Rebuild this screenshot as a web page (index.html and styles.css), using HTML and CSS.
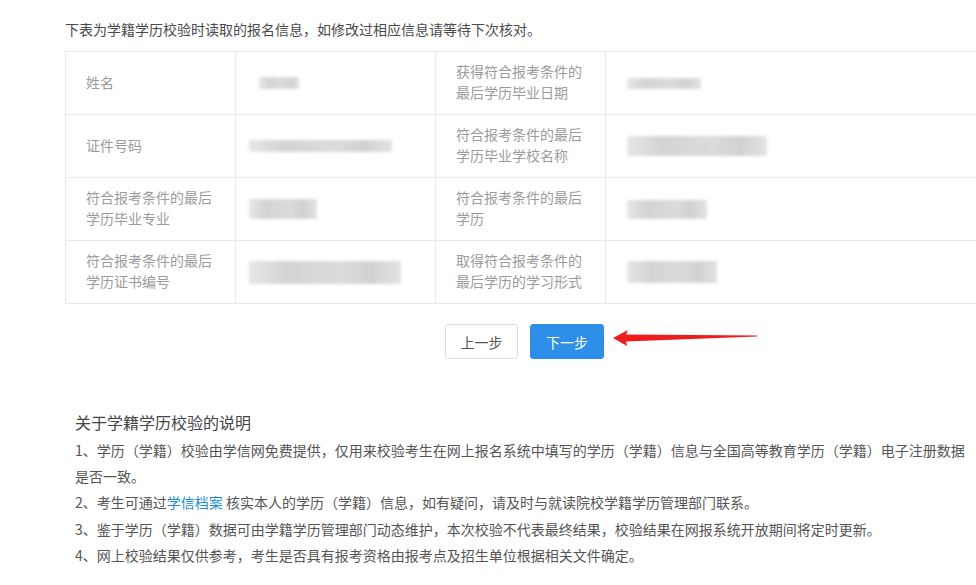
FILE: index.html
```html
<!DOCTYPE html>
<html lang="zh-CN">
<head>
<meta charset="utf-8">
<title>学籍学历校验</title>
<link rel="stylesheet" href="styles.css">
</head>
<body>
<div class="wrap">
  <p class="intro">下表为学籍学历校验时读取的报名信息，如修改过相应信息请等待下次核对。</p>
  <div class="table">
    <div class="cell label">姓名</div>
    <div class="cell value"><span class="blob b-name"></span></div>
    <div class="cell label">获得符合报考条件的<br>最后学历毕业日期</div>
    <div class="cell value"><span class="blob b-date"></span></div>

    <div class="cell label">证件号码</div>
    <div class="cell value"><span class="blob b-id"></span></div>
    <div class="cell label">符合报考条件的最后<br>学历毕业学校名称</div>
    <div class="cell value"><span class="blob b-school"></span></div>

    <div class="cell label">符合报考条件的最后<br>学历毕业专业</div>
    <div class="cell value"><span class="blob b-major"></span></div>
    <div class="cell label">符合报考条件的最后<br>学历</div>
    <div class="cell value"><span class="blob b-level"></span></div>

    <div class="cell label">符合报考条件的最后<br>学历证书编号</div>
    <div class="cell value"><span class="blob b-cert"></span></div>
    <div class="cell label">取得符合报考条件的<br>最后学历的学习形式</div>
    <div class="cell value"><span class="blob b-form"></span></div>
  </div>

  <div class="actions">
    <button class="btn btn-prev">上一步</button>
    <button class="btn btn-next">下一步</button>
    <svg class="arrow" width="160" height="30" viewBox="0 0 160 30">
      <polygon points="8,14 23,6 21,10.5 152,11.6 152,12.6 21,17.5 22,22" fill="#ee1c1c"/>
    </svg>
  </div>
</div>

<div class="notes">
  <h3 class="notes-title">关于学籍学历校验的说明</h3>
  <p>1、学历（学籍）校验由学信网免费提供，仅用来校验考生在网上报名系统中填写的学历（学籍）信息与全国高等教育学历（学籍）电子注册数据是否一致。</p>
  <p>2、考生可通过<a class="link" href="#">学信档案</a> 核实本人的学历（学籍）信息，如有疑问，请及时与就读院校学籍学历管理部门联系。</p>
  <p>3、鉴于学历（学籍）数据可由学籍学历管理部门动态维护，本次校验不代表最终结果，校验结果在网报系统开放期间将定时更新。</p>
  <p>4、网上校验结果仅供参考，考生是否具有报考资格由报考点及招生单位根据相关文件确定。</p>
</div>
</body>
</html>
```

FILE: styles.css
```css
html, body {
  margin: 0;
  padding: 0;
  background: #fff;
  overflow: hidden;
}
body {
  width: 976px;
  height: 585px;
  font-family: "Noto Sans CJK SC", "Noto Sans", sans-serif;
  color: #555;
}
.wrap {
  margin-left: 65px;
  width: 919px;
  padding-top: 19px;
}
.intro {
  margin: 0;
  font-size: 14px;
  line-height: 20px;
  color: #4a4a4a;
}
.table {
  margin-top: 12px;
  display: grid;
  grid-template-columns: 170px 200px 170px 1fr;
  grid-auto-rows: 63px;
  border-top: 1px solid #e9e9e9;
  border-left: 1px solid #e9e9e9;
}
.cell {
  box-sizing: border-box;
  border-right: 1px solid #e9e9e9;
  border-bottom: 1px solid #e9e9e9;
  display: flex;
  align-items: center;
}
.label {
  padding-left: 20px;
  padding-bottom: 2px;
  font-size: 14px;
  line-height: 21px;
  color: #9b9b9b;
}
.value {
  padding-left: 13px;
}
.blob {
  display: block;
  background: linear-gradient(90deg, #e4e4e6 0%, #cfcfd2 25%, #d8d8da 60%, #cdcdd0 80%, #e0e0e2 100%);
  filter: blur(1.6px);
  opacity: 0.9;
}
.b-name { width: 40px; height: 12px; margin-left: 10px; }
.b-id { width: 143px; height: 12px; }
.b-major { width: 68px; height: 20px; }
.b-cert { width: 152px; height: 23px; }
.b-date { width: 74px; height: 11px; margin-left: 8px; }
.b-school { width: 140px; height: 20px; margin-left: 8px; }
.b-level { width: 80px; height: 19px; margin-left: 8px; }
.b-form { width: 90px; height: 22px; margin-left: 8px; }

.actions {
  position: relative;
  margin-top: 20px;
  display: flex;
  justify-content: center;
  gap: 12px;
}
.btn {
  height: 35px;
  border-radius: 3px;
  font-family: "Noto Sans CJK SC", "Noto Sans", sans-serif;
  font-size: 14px;
  padding: 0;
  cursor: pointer;
}
.btn-prev {
  width: 73px;
  background: #fff;
  border: 1px solid #dedede;
  color: #555;
}
.btn-next {
  width: 74px;
  background: #2d8fe7;
  border: 1px solid #2d8fe7;
  color: #fff;
}
.arrow {
  position: absolute;
  left: 540px;
  top: 0;
}

.notes {
  margin-left: 75px;
  padding-top: 51px;
  width: 900px;
}
.notes-title {
  margin: 0 0 3px;
  font-size: 16px;
  font-weight: normal;
  line-height: 24px;
  color: #444;
}
.notes p {
  margin: 0;
  font-size: 14px;
  line-height: 26.2px;
  color: #555;
}
.link {
  color: #1e8ed6;
  text-decoration: none;
}
```
